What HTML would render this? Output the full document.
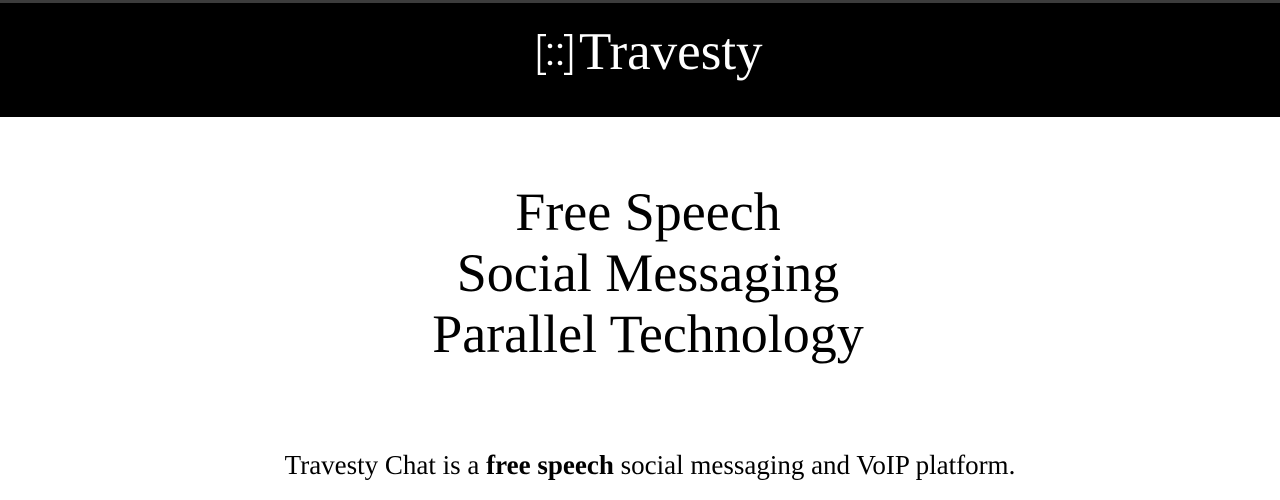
<!DOCTYPE html>
<html><head><style>
body{margin:0;background:#fff;font-family:"Liberation Serif",serif;width:1280px;height:500px;overflow:hidden}
.top{height:3px;background:#3c3c3c}
.hdr{height:114px;background:#000;color:#fff;position:relative}
.logo{position:absolute;left:579px;top:14px;font-size:53px;line-height:70px;white-space:nowrap}
svg{position:absolute;left:537px;top:31px}
h1{margin:0;position:absolute;top:182px;left:8px;width:1280px;text-align:center;font-weight:normal;font-size:54px;line-height:61px}
p{position:absolute;top:450px;left:10px;width:1280px;text-align:center;margin:0;font-size:27px}
</style></head><body>
<div class="top"></div>
<div class="hdr">
<svg width="36" height="41" viewBox="0 0 36 41" fill="none" stroke="#fff" stroke-width="2.5">
<path d="M9 1H2V40H9"/><path d="M27 1H34V40H27"/>
<g fill="#fff" stroke="none"><circle cx="13" cy="12" r="2.3"/><circle cx="23" cy="12" r="2.3"/><circle cx="13" cy="29" r="2.3"/><circle cx="23" cy="29" r="2.3"/></g>
</svg>
<div class="logo">Travesty</div></div>
<h1>Free Speech<br>Social Messaging<br>Parallel Technology</h1>
<p>Travesty Chat is a <b>free speech</b> social messaging and VoIP platform.</p>
</body></html>
